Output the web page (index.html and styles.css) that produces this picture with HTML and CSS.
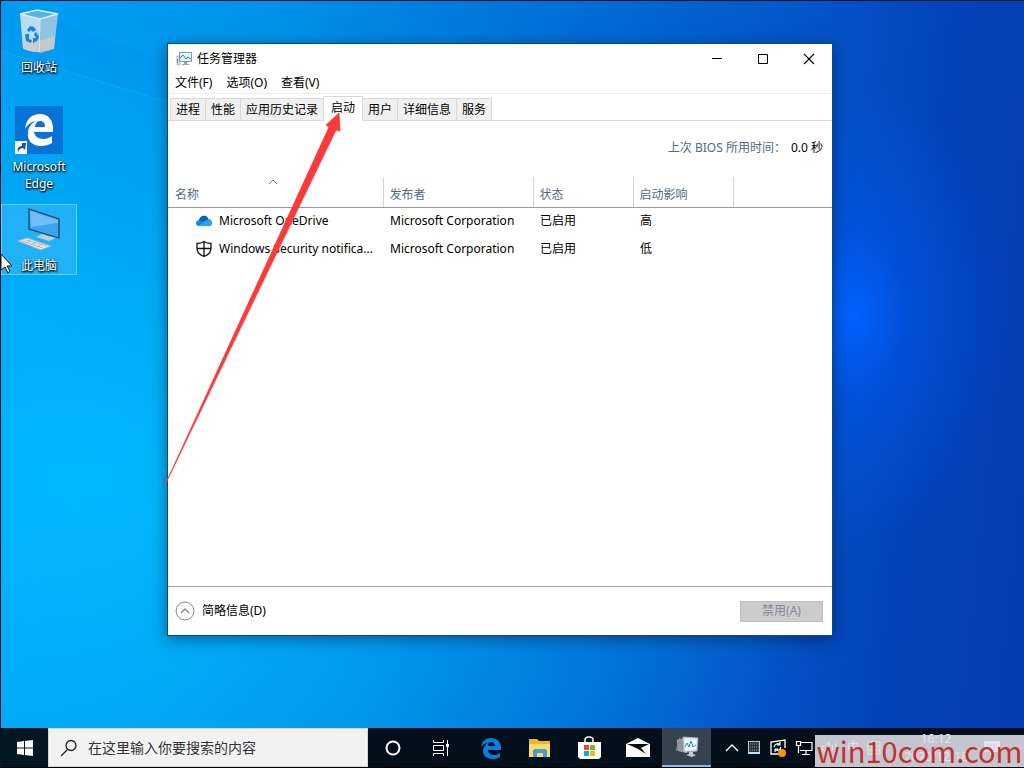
FILE: index.html
```html
<!DOCTYPE html>
<html lang="zh-CN">
<head>
<meta charset="utf-8">
<title>任务管理器</title>
<link rel="stylesheet" href="styles.css">
</head>
<body>
<main class="desktop">
  <svg class="rays" viewBox="0 0 1024 728" preserveAspectRatio="none" aria-hidden="true">
    <path d="M0 50L850 312L0 0Z" fill="#0078e0" opacity=".08"/>
    <path d="M0 50L400 173" stroke="#5cc4ff" stroke-width="1" opacity=".2"/>
    <path d="M0 537L400 440L400 728L0 728Z" fill="#28c4ff" opacity=".06"/>
  </svg>
  <nav class="shortcuts">
    <a class="shortcut" href="#bin">
      <svg width="48" height="48" viewBox="0 0 48 48" aria-hidden="true">
        <path d="M5 7L25 12L22 45Q13 45 8 41Z" fill="#b9dcf0"/>
        <path d="M25 12L43 7L39 42L22 45Z" fill="#8fc4e2"/>
        <path d="M7 31L23 34L40 29L39 42L26 46L8 42Z" fill="#d6c9c4" opacity=".75"/>
        <path d="M5 7L22 3L43 7L25 12Z" fill="#55b3e8" stroke="#d8eef9" stroke-width="1.3"/>
        <path d="M25 12L24 45" stroke="#dceffa"/>
        <path d="M12 23L15 19L19 20L21 23L18 25L16 23L14 25ZM10 27L14 27L14 32L17 33L16 36L11 34ZM21 25L24 30L22 34L18 36L18 31L21 31L19 27Z" fill="#1684d8"/>
      </svg>
      <span>回收站</span>
    </a>
    <a class="shortcut" href="#edge">
      <svg width="48" height="48" viewBox="0 0 48 48" aria-hidden="true">
        <rect width="48" height="48" fill="#0873d6"/>
        <path d="M10 23C11 13 17 8 25 8C34 8 38 15 38 22V26H19C20 31 24 33 29 33C32 33 34 32 37 30V37C34 39 30 40 26 40C17 40 12 34 13 27C13 21 17 17 21 15C16 16 12 19 10 23ZM20 21H30C30 17 28 15 25 15C22 15 20 18 20 21Z" fill="#fff"/>
        <rect x="0" y="35" width="12" height="13" fill="#f4f8fc"/>
        <path d="M3 46C2 42 4 40 7 40V37L11 37L10 44L8 42C5 42 4 44 3 46Z" fill="#1c4f9c"/>
      </svg>
      <span>Microsoft<br>Edge</span>
    </a>
    <a class="shortcut selected" href="#pc">
      <svg width="48" height="48" viewBox="0 0 48 48" aria-hidden="true">
        <path d="M14 4L44 14V33L14 24Z" fill="#3aa4ee" stroke="#24445e" stroke-width="1.3"/>
        <path d="M15 6L43 15V18L16 22Z" fill="#86cbfa" opacity=".7"/>
        <path d="M27 29L33 31L41 33L34 36L21 32Z" fill="#c3ccd2"/>
        <path d="M3 36L12 33L36 41L26 45Z" fill="#e6eaec" stroke="#aab4ba"/>
        <path d="M7 36L28 43M11 35L32 41M11 38L16 35M16 40L21 37M22 42L27 39" stroke="#a5afb5" stroke-width=".8"/>
      </svg>
      <span>此电脑</span>
    </a>
  </nav>
  <svg class="cursor" width="13" height="21" viewBox="0 0 13 21" aria-hidden="true"><path d="M0 1L11 13H6L9 18L7 20L4 14L0 17Z" fill="#fff" stroke="#111"/></svg>

  <section class="window" aria-label="任务管理器">
    <header class="titlebar">
      <svg width="16" height="16" viewBox="0 0 16 16" aria-hidden="true">
        <path d="M1 5H4V14H1Z" fill="#dce3e5" stroke="#9aa5a8" stroke-width=".7"/><path d="M1.500 8V12" stroke="#3ba35c"/>
        <rect x="3.500" y="1.500" width="12" height="9" fill="#e2f5ff" stroke="#879ba5"/>
        <path d="M4 7L7 4L10 8L12 6L15 8" fill="none" stroke="#1689c9"/><path d="M8 11H11V13H13V14H6V13H8Z" fill="#9aa5a8"/>
      </svg>
      <h1>任务管理器</h1>
      <div class="controls">
        <button aria-label="最小化"><svg width="12" height="12" viewBox="0 0 12 12"><path d="M1 5.500H11" stroke="#000"/></svg></button>
        <button aria-label="最大化"><svg width="12" height="12" viewBox="0 0 12 12"><path d="M1.500 1.500H10.500V10.500H1.500Z" fill="none" stroke="#000"/></svg></button>
        <button aria-label="关闭"><svg width="12" height="12" viewBox="0 0 12 12"><path d="M1 1L11 11M11 1L1 11" stroke="#000" stroke-width="1.100"/></svg></button>
      </div>
    </header>
    <div class="menubar"><button>文件(F)</button><button>选项(O)</button><button>查看(V)</button></div>
    <div class="tabs" role="tablist">
      <button role="tab">进程</button><button role="tab">性能</button><button role="tab">应用历史记录</button><button role="tab" class="active" aria-selected="true">启动</button><button role="tab">用户</button><button role="tab">详细信息</button><button role="tab">服务</button>
    </div>
    <p class="bios"><span>上次 BIOS 所用时间：</span><b>0.0 秒</b></p>
    <div class="listing">
      <table>
        <colgroup><col class="c-name"><col class="c-pub"><col class="c-state"><col class="c-state"><col></colgroup>
        <thead><tr>
          <th><svg class="sort" width="10" height="6" viewBox="0 0 10 6" aria-hidden="true"><path d="M1 5L5 1L9 5" fill="none" stroke="#777"/></svg>名称</th>
          <th>发布者</th><th>状态</th><th>启动影响</th><th></th>
        </tr></thead>
        <tbody>
          <tr><td><span class="app"><svg width="18" height="18" viewBox="0 0 18 18" aria-hidden="true"><path d="M4 14C0 14 0 9 4 8C5 3 12 2 13 7C18 7 18 14 14 14Z" fill="#1685dc"/><path d="M4 8C6 3 12 2 13 7L8 10Z" fill="#0b62b5"/><path d="M3 14L10 9L13 8C18 7 18 14 14 14Z" fill="#29a5ee"/></svg><span>Microsoft OneDrive</span></span></td><td>Microsoft Corporation</td><td>已启用</td><td>高</td><td></td></tr>
          <tr><td><span class="app"><svg width="18" height="18" viewBox="0 0 18 18" aria-hidden="true"><path d="M9 1.500C7 3 4 3.500 2 3.500V8C2 12 5 15 9 16.500C13 15 16 12 16 8V3.500C14 3.500 11 3 9 1.500ZM9 2V16M2 8.500H16" fill="none" stroke="#111" stroke-width="1.300"/></svg><span>Windows Security notifica...</span></span></td><td>Microsoft Corporation</td><td>已启用</td><td>低</td><td></td></tr>
        </tbody>
      </table>
    </div>
    <footer class="actions">
      <button class="fewer"><svg width="20" height="20" viewBox="0 0 20 20" aria-hidden="true"><circle cx="10" cy="10" r="9" fill="none" stroke="#888"/><path d="M6 12L10 8L14 12" fill="none" stroke="#888" stroke-width="1.300"/></svg>简略信息(D)</button>
      <button class="disable" disabled>禁用(A)</button>
    </footer>
  </section>
  <svg class="pointer" width="180" height="380" viewBox="0 0 180 380" aria-hidden="true"><path d="M176 3L163 15L166 17L2 375L173 20L177 21Z" fill="#fb3a3a" stroke="#fb3a3a" stroke-width=".8"/></svg>
</main>

<footer class="taskbar">
  <button class="start" aria-label="开始"><svg width="16" height="16" viewBox="0 0 16 16"><path d="M0 2L7 1V7.500H0ZM8 1L16 0V7.500H8ZM0 8.500H7V15L0 14ZM8 8.500H16V16L8 15Z" fill="#fff"/></svg></button>
  <label class="search">
    <svg width="18" height="18" viewBox="0 0 18 18" aria-hidden="true"><circle cx="11" cy="6.500" r="5" fill="none" stroke="#222" stroke-width="1.300"/><path d="M7.500 10.500L1 17" stroke="#222" stroke-width="1.300"/></svg>
    <input type="text" aria-label="搜索" placeholder="在这里输入你要搜索的内容">
  </label>
  <button class="task" aria-label="Cortana"><svg width="24" height="24" viewBox="0 0 24 24"><circle cx="12" cy="12" r="6.500" fill="none" stroke="#fff" stroke-width="2"/></svg></button>
  <button class="task" aria-label="任务视图"><svg width="24" height="24" viewBox="0 0 24 24"><path d="M3.500 4V6.500H13.500V4M3.500 20V17.500H13.500V20M3.500 9.500H13.500V14.500H3.500ZM17.500 4V20" fill="none" stroke="#fff"/><path d="M16 8H19V11H16Z" fill="#fff"/></svg></button>
  <button class="task" aria-label="Edge"><svg width="24" height="24" viewBox="0 0 24 24"><path d="M2 11C3 5 7 2 12 2C18 2 22 6 22 12V14H9C9 17 12 19 15 19C18 19 19 18 21 17V21C19 22 17 23 13 23C7 23 4 19 4 15C4 11 7 8 9 7C6 7 3 9 2 11ZM9 10H16C16 8 14 6 12 6C10 6 9 8 9 10Z" fill="#0b7ddd"/></svg></button>
  <button class="task" aria-label="文件资源管理器"><svg width="24" height="24" viewBox="0 0 24 24"><path d="M1 3H9L11 5H22V21H1Z" fill="#edb72f"/><path d="M1 8H22V21H1Z" fill="#ffda68"/><path d="M5 21V15Q5 13 7 13H17Q19 13 19 15V21H15V17H9V21Z" fill="#3c9fdc"/></svg></button>
  <button class="task" aria-label="Microsoft Store"><svg width="24" height="24" viewBox="0 0 24 24"><path d="M8 7V4C8 0 16 0 16 4V7" fill="none" stroke="#fff" stroke-width="1.500"/><path d="M1 6H24V21L22 23H3L1 21Z" fill="#fff"/><path d="M7 9H12V14H7Z" fill="#e64b28"/><path d="M13 9H18V14H13Z" fill="#78b52b"/><path d="M7 15H12V20H7Z" fill="#17a3e4"/><path d="M13 15H18V20H13Z" fill="#f9b719"/></svg></button>
  <button class="task" aria-label="邮件"><svg width="24" height="24" viewBox="0 0 24 24"><path d="M0 8L12 2L24 8V21H0Z" fill="#fff"/><path d="M1 8H23L15 12L20 18L12 13Z" fill="#03101c"/></svg></button>
  <button class="task open" aria-label="任务管理器"><svg width="24" height="24" viewBox="0 0 24 24"><path d="M2 5L12 2V18L3 16Z" fill="#adb4b7"/><path d="M4 3L8 5V17L1 15Z" fill="#8d969b"/><path d="M8 2L23 3L22 16L9 17Z" fill="#e1e7ea" stroke="#a5aeb2"/><path d="M10 5L21 5V14L10 15Z" fill="#f2fbff"/><path d="M10 12L12 8L14 12L16 6L18 12L21 10" fill="none" stroke="#268ac5"/><path d="M14 17H18V19L21 20L17 22L11 20L14 19Z" fill="#c5ced2"/></svg></button>
  <div class="tray">
    <svg width="14" height="20" viewBox="0 0 14 20" aria-hidden="true"><path d="M1 13L7 7L13 13" fill="none" stroke="#fff" stroke-width="1.400"/></svg>
    <svg width="14" height="20" viewBox="0 0 14 20" aria-hidden="true"><rect x="1.500" y="3.500" width="11" height="12" fill="#25333c" stroke="#b9c4ca"/><path d="M3 6H12M3 9H12M3 12H12" stroke="#8d9aa1" stroke-dasharray="1 1"/><path d="M1 14H13V16H1Z" fill="#bbe5f6"/></svg>
    <svg width="18" height="20" viewBox="0 0 18 20" aria-hidden="true"><path d="M10 16H2V4L16 2V10" fill="none" stroke="#fff" stroke-width="1.300"/><path d="M5 9C6 5 10 5 11 7M11 4V7H8M12 9C11 13 7 13 6 11M6 14V11H9" fill="none" stroke="#fff" stroke-width="1.200"/><circle cx="13" cy="15" r="4" fill="#ff950a"/></svg>
    <svg width="18" height="20" viewBox="0 0 18 20" aria-hidden="true"><path d="M5 4.500H17V12.500H5M11 13V16M7 16.500H15M1.500 3.500H5.500V7.500H1.500ZM3.500 8V15" fill="none" stroke="#fff" stroke-width="1.200"/></svg>
    <svg width="18" height="20" viewBox="0 0 18 20" aria-hidden="true"><path d="M1 8H4L8 4V16L4 12H1ZM11 7Q13 10 11 13M14 5Q17 10 14 15" fill="none" stroke="#fff"/></svg>
    <span>中</span>
    <svg width="14" height="20" viewBox="0 0 14 20" aria-hidden="true"><path d="M1 4H13V16H1ZM1 8H13M1 12H13M5 4V16M9 4V16" fill="none" stroke="#fff"/></svg>
    <time>16:12<br>2020/12/18</time>
    <svg width="16" height="20" viewBox="0 0 16 20" aria-hidden="true"><path d="M0 3H16V14H9L6 17V14H0Z" fill="#fff"/><path d="M3 7H13M3 10H13" stroke="#8b9299"/></svg>
  </div>
  <div class="watermark">win10com.com</div>
</footer>
</body>
</html>
```

FILE: styles.css
```css
* { box-sizing: border-box; }

body {
  margin: 0;
  height: 100vh;
  display: flex;
  flex-direction: column;
  overflow: hidden;
  border: solid #03182a;
  border-width: 1px 0 0 1px;
  font: 12px/18px "Noto Sans", "Noto Sans CJK SC", sans-serif;
  color: #000;
}

button {
  border: 0;
  padding: 0;
  background: none;
  font: inherit;
  color: inherit;
}

svg { display: block; flex: none; }

.desktop {
  position: relative;
  flex: 1;
  min-height: 0;
  background:
    radial-gradient(ellipse 15% 32% at 83% 43%, #0062ff 0%, rgba(0, 90, 245, .5) 35%, rgba(0, 80, 230, 0) 100%),
    radial-gradient(ellipse 75% 75% at 8% 66%, rgba(0, 190, 255, .85) 0%, rgba(0, 180, 255, 0) 100%),
    linear-gradient(96deg, #0099f2 0%, #0090e8 22%, #0070d8 50%, #0454c8 74%, #0442b8 88%, #043cb2 100%);
}

.rays { position: absolute; inset: 0; width: 100%; height: 100%; }

.shortcuts {
  position: relative;
  width: 76px;
  padding-top: 5px;
  display: flex;
  flex-direction: column;
  gap: 28px;
}

.shortcut {
  display: flex;
  flex-direction: column;
  align-items: center;
  gap: 4px;
  border: 1px solid transparent;
  color: #fff;
  text-align: center;
  text-decoration: none;
  line-height: 17px;
  text-shadow: 1px 1px 2px #000, 0 1px 2px #000;
}

.shortcut + .selected { margin-top: -17px; background: rgba(80, 190, 250, .4); border-color: #66cbff; }

.cursor { position: absolute; left: 0; top: 252px; }

.window {
  position: absolute;
  left: 166px;
  top: 42px;
  right: 191px;
  bottom: 92px;
  display: flex;
  flex-direction: column;
  background: #fff;
  border: 1px solid #17486e;
  box-shadow: 0 3px 14px rgba(0, 20, 60, .5);
}

.titlebar { display: flex; align-items: center; height: 29px; padding-left: 8px; }
.titlebar h1 { margin: 0 0 0 5px; font-size: 12px; font-weight: 400; }
.controls { display: flex; margin-left: auto; }
.controls button { width: 46px; height: 29px; display: grid; place-items: center; }

.menubar { display: flex; align-items: flex-end; gap: 14px; height: 21px; padding: 0 7px 1px; border-bottom: 1px solid #eee; }

.tabs {
  display: flex;
  align-items: flex-end;
  height: 27px;
  padding-left: 2px;
  border-bottom: 1px solid #d9d9d9;
}
.tabs button {
  height: 22px;
  padding: 0 5px;
  background: #f0f0f0;
  border: solid #d9d9d9;
  border-width: 1px 1px 0 0;
  line-height: 20px;
}
.tabs button:first-child { border-left-width: 1px; }
.tabs .active {
  height: 25px;
  padding: 0 7px 3px;
  margin-bottom: -1px;
  background: #fff;
}

.bios {
  display: flex;
  justify-content: flex-end;
  gap: 5px;
  margin: 18px 9px 20px;
  color: #526a80;
}
.bios b { font-weight: 400; color: #000; }

.listing { flex: 1; border-bottom: 1px solid #a0a0a0; }

table { width: 100%; table-layout: fixed; border-collapse: collapse; }
.c-name { width: 215px; }
.c-pub { width: 150px; }
.c-state { width: 100px; }

th {
  position: relative;
  height: 30px;
  padding: 9px 6px 3px;
  border-right: 1px solid #d4d4d4;
  border-bottom: 1px solid #999;
  color: #526a80;
  font-weight: 400;
  line-height: 17px;
  text-align: left;
}
th:first-child, td:first-child { padding-left: 7px; }
th:last-child { border-right: 0; }
.sort { position: absolute; left: 100px; top: 2px; }

td { height: 28px; padding: 0 6px 0 7px; white-space: nowrap; }
.app { display: flex; align-items: center; gap: 6px; padding-left: 20px; }

.actions {
  display: flex;
  align-items: center;
  justify-content: space-between;
  height: 48px;
  padding: 0 9px 0 7px;
}
.fewer { display: flex; align-items: center; gap: 7px; }
.disable {
  width: 83px;
  height: 21px;
  background: #ccc;
  border: 1px solid #bfbfbf;
  color: #838798;
}

.pointer { position: absolute; left: 162px; top: 109px; }

.taskbar {
  position: relative;
  display: flex;
  height: 40px;
  background: #020f1a;
  border-bottom: 1px solid #000;
}
.start { width: 47px; display: grid; place-items: center; background: #021722; }
.search {
  display: flex;
  align-items: center;
  gap: 10px;
  width: 320px;
  padding-left: 11px;
  background: #f2f2f2;
  border: 1px solid #d5d5d5;
}
.search input {
  flex: 1;
  min-width: 0;
  padding: 0;
  border: 0;
  background: none;
  font: 14px/20px "Noto Sans", "Noto Sans CJK SC", sans-serif;
}
.search input::placeholder { color: #333; opacity: 1; }

.task { width: 49px; display: grid; place-items: center; }
.open { background: #35434f; border-bottom: 2px solid #83bce8; }

.tray {
  flex: 1;
  min-width: 0;
  display: flex;
  align-items: center;
  gap: 8px;
  padding: 0 24px 0 14px;
  color: #fff;
}
.tray time { margin-left: auto; padding-right: 8px; text-align: center; }

.watermark {
  position: absolute;
  right: 0;
  bottom: 0;
  width: 209px;
  height: 32px;
  background: rgba(222, 224, 232, .88);
  color: #c4302b;
  font: 29px/30px "Noto Sans CJK SC", sans-serif;
  text-align: center;
}
```
